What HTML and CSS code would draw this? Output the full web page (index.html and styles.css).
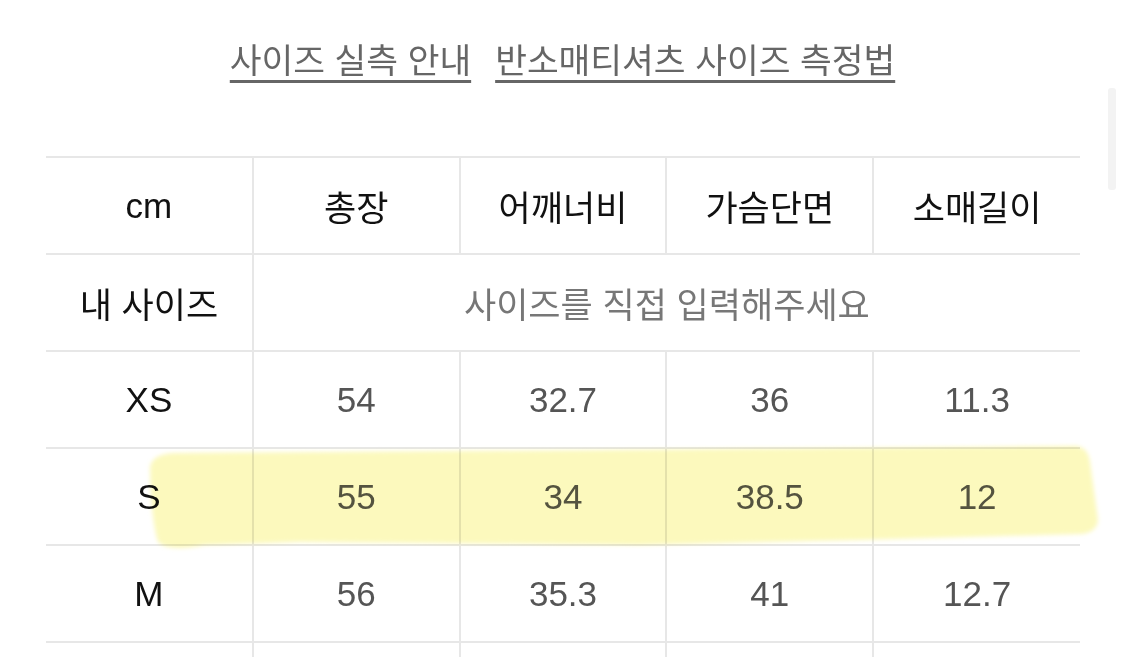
FILE: index.html
```html
<!DOCTYPE html>
<html lang="ko">
<head>
<meta charset="utf-8">
<title>사이즈 실측</title>
<link rel="stylesheet" href="styles.css">
</head>
<body>
<div class="page">
  <nav class="links">
    <a href="#" class="link">사이즈 실측 안내</a>
    <a href="#" class="link">반소매티셔츠 사이즈 측정법</a>
  </nav>
  <div class="table-wrap">
    <table class="size-table">
      <tr class="head">
        <th>cm</th><th>총장</th><th>어깨너비</th><th>가슴단면</th><th>소매길이</th>
      </tr>
      <tr>
        <th>내 사이즈</th><td colspan="4" class="input">사이즈를 직접 입력해주세요</td>
      </tr>
      <tr><th>XS</th><td>54</td><td>32.7</td><td>36</td><td>11.3</td></tr>
      <tr><th>S</th><td>55</td><td>34</td><td>38.5</td><td>12</td></tr>
      <tr><th>M</th><td>56</td><td>35.3</td><td>41</td><td>12.7</td></tr>
      <tr class="next"><th></th><td></td><td></td><td></td><td></td></tr>
    </table>
    <svg class="highlight" width="1125" height="657" viewBox="0 0 1125 657" aria-hidden="true">
      <defs>
        <filter id="soft" x="-5%" y="-20%" width="110%" height="140%">
          <feGaussianBlur stdDeviation="2"/>
        </filter>
      </defs>
      <path filter="url(#soft)" fill="#fcf9bd" d="M150,468 Q151,455 172,453 L600,450 L1076,446 Q1088,447 1090,462 L1098,520 Q1097,532 1082,534 L860,540 L640,545 L300,542 L205,545 Q168,552 158,542 Q151,520 150,468 Z"/>
    </svg>
  </div>
  <div class="scrollbar"></div>
</div>
</body>
</html>
```
FILE: styles.css
```css
html, body {
  margin: 0;
  padding: 0;
  background: #fff;
}
body {
  font-family: "Liberation Sans", "Noto Sans CJK KR", sans-serif;
  width: 1125px;
  height: 657px;
  overflow: hidden;
}
.page {
  position: relative;
  width: 1125px;
  height: 657px;
}
.links {
  display: flex;
  justify-content: center;
  gap: 24px;
  padding-top: 38px;
  height: 121px;
  box-sizing: border-box;
  font-size: 34.5px;
  line-height: 46px;
}
.link {
  color: #666;
  text-decoration: underline;
  text-decoration-thickness: 3px;
  text-underline-offset: 7px;
  text-decoration-color: #666;
}
.table-wrap {
  position: absolute;
  left: 0;
  top: 0;
  width: 1125px;
  height: 657px;
  padding-top: 156px;
  padding-left: 46px;
  box-sizing: border-box;
}
.size-table {
  border-collapse: collapse;
  width: 1034px;
  table-layout: fixed;
  font-size: 35px;
}
.size-table tr {
  height: 97px;
}
.size-table th,
.size-table td {
  border-top: 2px solid #e7e7e7;
  border-bottom: 2px solid #e7e7e7;
  border-left: 2px solid #e7e7e7;
  padding: 0;
  text-align: center;
  vertical-align: middle;
}
.size-table th:first-child {
  border-left: none;
}
.size-table th {
  font-weight: 400;
  color: #111;
}
.size-table td {
  color: #555;
}
.size-table td.input {
  color: #777;
}
.highlight {
  position: absolute;
  left: 0;
  top: 0;
  mix-blend-mode: multiply;
  pointer-events: none;
}
.scrollbar {
  position: absolute;
  left: 1108px;
  top: 88px;
  width: 8px;
  height: 102px;
  background: #f3f3f3;
  border-radius: 3px;
}
```
